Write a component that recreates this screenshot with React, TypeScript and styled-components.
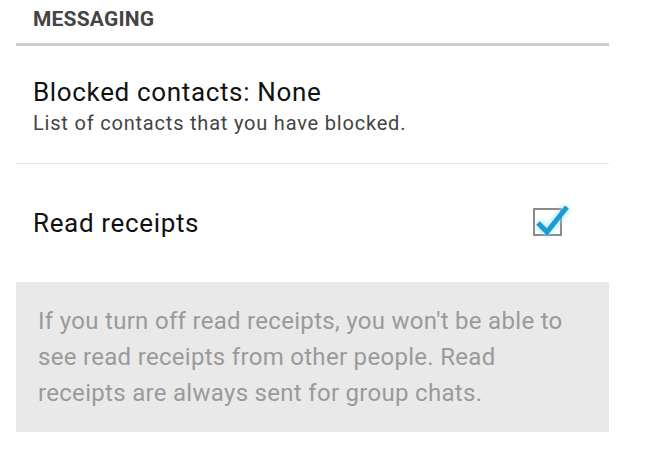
import React from "react";
import styled, { createGlobalStyle } from "styled-components";

const GlobalStyle = createGlobalStyle`
  html, body {
    margin: 0;
    padding: 0;
    background: #ffffff;
    font-family: Roboto, "Noto Sans", sans-serif;
  }
`;

const Page = styled.div`
  width: 650px;
  height: 462px;
  padding: 0 41px 0 16px;
  box-sizing: border-box;
  overflow: hidden;
`;

const SectionHeader = styled.div`
  height: 46px;
  padding: 0 0 6px 17px;
  display: flex;
  align-items: center;
  font-size: 21px;
  font-weight: 700;
  color: #444444;
  letter-spacing: 0.2px;
  border-bottom: 3px solid #cfcfcf;
  box-sizing: border-box;
`;

const Row = styled.div<{ $top?: boolean; $last?: boolean }>`
  height: 118px;
  padding: ${(p) => (p.$top ? "30px 44px 0 17px" : "0 47px 0 17px")};
  display: flex;
  align-items: ${(p) => (p.$top ? "flex-start" : "center")};
  justify-content: space-between;
  border-bottom: ${(p) => (p.$last ? "none" : "1px solid #e6e6e6")};
  box-sizing: border-box;
`;

const RowText = styled.div`
  display: flex;
  flex-direction: column;
`;

const Title = styled.div`
  font-size: 26px;
  letter-spacing: 0.65px;
  color: #111111;
  line-height: 32px;
`;

const Summary = styled.div`
  font-size: 20px;
  letter-spacing: 0.8px;
  color: #444444;
  line-height: 24px;
  margin-top: 3px;
`;

const CheckBox = styled.div`
  position: relative;
  width: 29px;
  height: 28px;
  border: 2px solid #8a8a8a;
  box-sizing: border-box;
  margin-top: -2px;

  svg {
    position: absolute;
    left: -2px;
    top: -12px;
    overflow: visible;
  }
`;

const Notice = styled.div`
  background: #e9e9e9;
  padding: 21px 20px 21px 22px;
  font-size: 24px;
  letter-spacing: 0.3px;
  line-height: 36px;
  color: #9a9a9a;
`;

export default function App() {
  return (
    <>
      <GlobalStyle />
      <Page>
        <SectionHeader>MESSAGING</SectionHeader>
        <Row $top>
          <RowText>
            <Title>Blocked contacts: None</Title>
            <Summary>List of contacts that you have blocked.</Summary>
          </RowText>
        </Row>
        <Row $last>
          <Title>Read receipts</Title>
          <CheckBox>
            <svg width="40" height="40" viewBox="0 0 40 40">
              <defs>
                <filter id="glow" x="-30%" y="-30%" width="160%" height="160%">
                  <feGaussianBlur stdDeviation="2" />
                </filter>
              </defs>
              <path
                d="M5 25 L14 34 L34 9"
                fill="none"
                stroke="#8fdaf5"
                strokeWidth="9"
                strokeLinejoin="round"
                opacity="0.55"
                filter="url(#glow)"
              />
              <path
                d="M5 25 L14 34 L34 9"
                fill="none"
                stroke="#1b9cd0"
                strokeWidth="5"
              />
            </svg>
          </CheckBox>
        </Row>
        <Notice>
          If you turn off read receipts, you won't be able to see read receipts
          from other people. Read
          <br />
          receipts are always sent for group chats.
        </Notice>
      </Page>
    </>
  );
}
